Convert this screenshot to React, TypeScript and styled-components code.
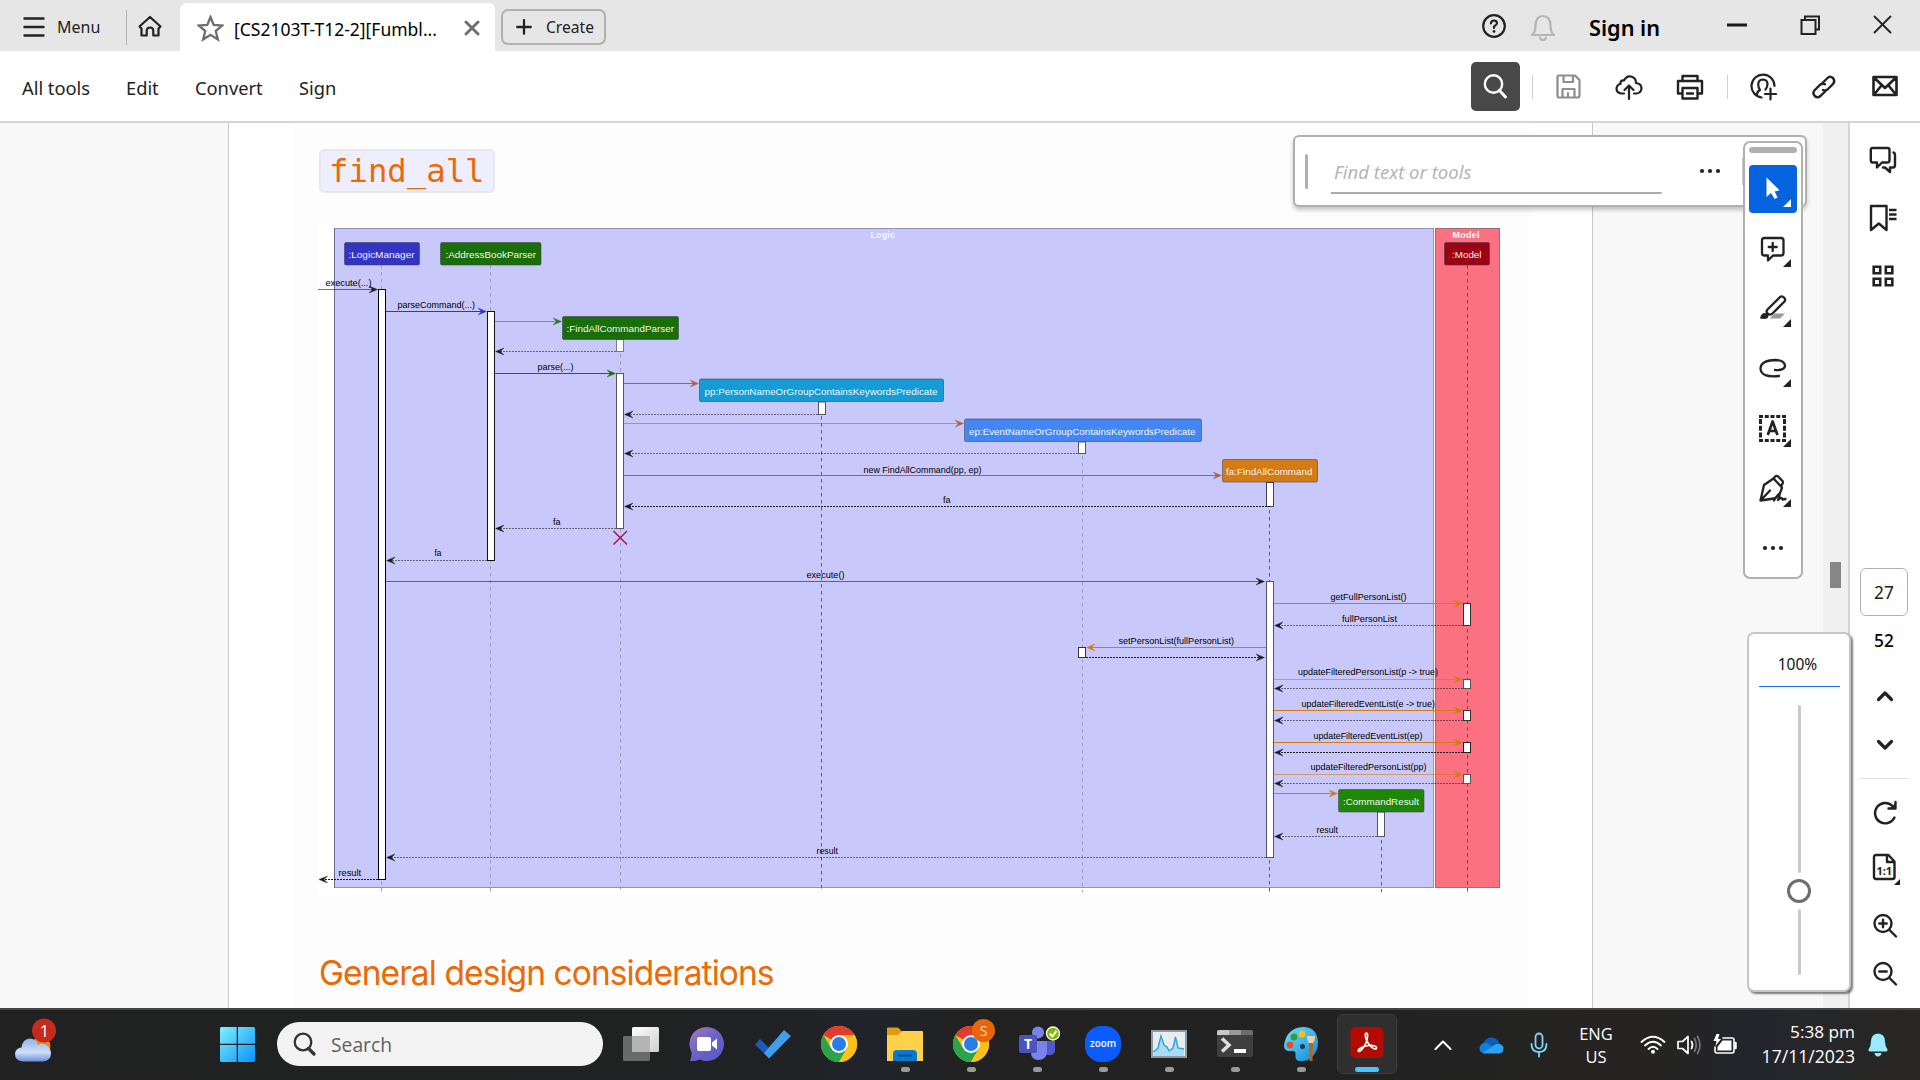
import React from 'react';
import styled, { createGlobalStyle } from 'styled-components';

const UI = '"Noto Sans", "Open Sans", sans-serif';
const INK = '#222222';

const Global = createGlobalStyle`
  * { box-sizing: border-box; }
  html, body { margin: 0; padding: 0; overflow: hidden; }
  body { font-family: ${UI}; color: ${INK}; background: #fff; }
  svg { display: block; flex: none; }
`;

const Screen = styled.div`
  width: 1920px;
  height: 1080px;
  display: grid;
  grid-template-rows: 51px 72px 885px 72px;
  overflow: hidden;
`;

const Spacer = styled.div`
  flex: 1;
`;

/* ---------- title bar ---------- */
const TitleBar = styled.header`
  display: flex;
  align-items: stretch;
  background: #e6e6e6;
`;

const MenuButton = styled.div`
  width: 126px;
  padding: 2px 0 0 23px;
  display: flex;
  align-items: center;
  gap: 12px;
  font-size: 16px;
`;

const TabDivider = styled.div`
  width: 1px;
  margin: 10px 0 6px;
  background: #b4b4b4;
`;

const HomeButton = styled.div`
  width: 53px;
  padding: 15px 0 0 10px;
`;

const DocTab = styled.div`
  width: 315px;
  margin-top: 3px;
  padding: 2px 15px 0 17px;
  border-radius: 6px 6px 0 0;
  background: #fff;
  display: flex;
  align-items: center;
  color: #000;
  font-size: 17.5px;
  white-space: nowrap;
`;

const TabTitle = styled.span`
  width: 206px;
  margin: 1px 25px 0 10px;
`;

const CreateButton = styled.div`
  width: 105px;
  height: 36px;
  margin: 9px 0 0 6px;
  border: 2px solid #b1b1b1;
  border-radius: 7px;
  display: flex;
  align-items: center;
  padding-left: 13px;
  gap: 14px;
  font-size: 15.6px;
`;

const WindowControls = styled.div`
  display: flex;
  align-items: center;
  padding-right: 28px;
`;

const BellSlot = styled.div`
  margin-left: 23px;
  padding-top: 4px;
`;

const RestoreSlot = styled.div`
  margin: 0 52px;
`;

const SignIn = styled.span`
  width: 72px;
  margin: 3px 65px 0 33px;
  font-size: 21.7px;
  font-weight: 600;
  color: #000;
  white-space: nowrap;
`;

/* ---------- tool bar ---------- */
const ToolBar = styled.nav`
  display: flex;
  align-items: center;
  background: #fff;
  border-bottom: 2px solid #d5d5d5;
  padding: 0 21px 0 22px;
`;

const ToolLabel = styled.span<{ $w: number }>`
  width: ${(p) => p.$w}px;
  padding-top: 3px;
  font-size: 18.3px;
  white-space: nowrap;
`;

const SearchToggle = styled.div`
  width: 49px;
  height: 49px;
  padding-right: 2px;
  border-radius: 5px;
  background: #484848;
  display: flex;
  align-items: center;
  justify-content: center;
`;

const ToolSeparator = styled.div<{ $l: number; $r: number }>`
  width: 1px;
  height: 24px;
  margin: 2px ${(p) => p.$r}px 0 ${(p) => p.$l}px;
  background: #cfcfcf;
`;

const ToolIcons = styled.div`
  display: flex;
  gap: 33px;
  padding-top: 2px;
`;

/* ---------- document ---------- */
const Body = styled.main`
  position: relative;
  display: grid;
  grid-template-columns: 228px 1365px 230px 25px 72px;
  overflow: hidden;
`;

const Gutter = styled.div`
  background: #f8f8f8;
`;

const Page = styled.section`
  border: solid #c9c9c9;
  border-width: 0 1px;
  padding: 0 63px 0 64px;
  background: #fff;
`;

const Sheet = styled.div`
  height: 100%;
  background: #fdfdfd;
  padding: 26px 0 0 26px;
`;

const CodeHeading = styled.h2`
  margin: 0;
  width: 176px;
  height: 44px;
  padding-left: 8px;
  border: 2px solid #e8e7f0;
  border-radius: 5px;
  background: #efeefe;
  color: #ea6a06;
  font: 400 32.3px/40px "DejaVu Sans Mono", monospace;
`;

const DiagramFrame = styled.figure`
  margin: 31px 0 0 -1px;
  width: 1185px;
  height: 672px;
  background: #fff;
`;

const SectionHeading = styled.h2`
  margin: 57px 0 0;
  color: #ea6a06;
  font: 400 33.5px/40px Inter, sans-serif;
  letter-spacing: -0.92px;
  white-space: nowrap;
`;

const ScrollTrack = styled.div`
  background: #f0f0f0;
  padding: 439px 0 0 7px;
`;

const ScrollThumb = styled.div`
  width: 11px;
  height: 26px;
  background: #868686;
`;

/* ---------- right rail ---------- */
const Rail = styled.aside`
  background: #fff;
  border-left: 2px solid #d5d5d5;
  display: flex;
  flex-direction: column;
  align-items: center;
  padding: 21px 2px 0 0;
`;

const RailItem = styled.div<{ $h: number; $left?: boolean }>`
  height: ${(p) => p.$h}px;
  width: 68px;
  padding: ${(p) => (p.$left ? '0 2px 0 0' : '0 0 0 2px')};
  display: flex;
  align-items: center;
  justify-content: center;
`;

const CountStack = styled.div`
  display: flex;
  flex-direction: column;
  align-items: center;
`;

const PageBox = styled.div`
  width: 48px;
  height: 48px;
  margin: 276px 0 6px;
  border: 1px solid #b3b3b3;
  border-radius: 6px;
  font-size: 17.3px;
  line-height: 47px;
  text-align: center;
`;

const PageTotal = styled.div`
  height: 38px;
  font-size: 17.3px;
  font-weight: 500;
  line-height: 38px;
  color: #000;
`;

const RuleSlot = styled.div`
  height: 22px;
  margin-bottom: 9px;
  display: flex;
  align-items: flex-end;
`;

const RailRule = styled.div`
  width: 49px;
  height: 1px;
  background: #e0e0e0;
`;

/* ---------- floating panels ---------- */
const FindPanel = styled.div`
  position: absolute;
  left: 1293px;
  top: 12px;
  width: 514px;
  height: 72px;
  border: 2px solid #b0b0b0;
  border-radius: 6px;
  background: #fff;
  box-shadow: 0 3px 4px rgba(0, 0, 0, 0.22);
  display: flex;
  align-items: center;
  padding-left: 10px;
`;

const FindGrip = styled.div`
  width: 3px;
  height: 35px;
  border-radius: 2px;
  background: #b0b0b0;
`;

const FindField = styled.div`
  width: 331px;
  height: 46px;
  margin: 0 37px 0 23px;
  padding: 7px 0 0 3px;
  border-bottom: 2px solid #aaaaaa;
  border-radius: 0 0 2px 0;
  color: #b5b5b5;
  font-size: 18.5px;
  font-style: italic;
  line-height: 34px;
`;

const FindRule = styled.div`
  width: 1px;
  height: 27px;
  margin-left: 21px;
  background: #c8c8c8;
`;

const QuickTools = styled.div`
  position: absolute;
  left: 1743px;
  top: 18px;
  width: 60px;
  height: 438px;
  border: 2px solid #b0b0b0;
  border-radius: 7px;
  background: #fff;
  display: flex;
  flex-direction: column;
  align-items: center;
  padding-top: 4px;
`;

const QuickGrip = styled.div`
  width: 48px;
  height: 6px;
  border-radius: 3px;
  background: #b0b0b0;
  margin-bottom: 12px;
`;

const QuickTool = styled.div<{ $active?: boolean }>`
  width: 48px;
  height: 48px;
  margin-bottom: 12px;
  border-radius: 4px;
  background: ${(p) => (p.$active ? '#0563e0' : 'transparent')};
`;

const QuickMore = styled.div`
  height: 46px;
  display: flex;
  align-items: center;
`;

const ZoomPanel = styled.div`
  position: absolute;
  left: 1747px;
  top: 509px;
  width: 104px;
  height: 360px;
  border: 2px solid #c6c6c6;
  border-radius: 7px;
  background: #fff;
  box-shadow: 2px 2px 2px rgba(0, 0, 0, 0.5);
  display: flex;
  flex-direction: column;
  align-items: center;
`;

const ZoomValue = styled.div`
  width: 81px;
  height: 53px;
  border-bottom: 1px solid #1473e6;
  padding: 16px 3px 0 0;
  font-size: 15.5px;
  line-height: 28px;
  text-align: center;
  color: #111;
`;

const SliderRail = styled.div<{ $h: number; $gap: number }>`
  width: 3px;
  height: ${(p) => p.$h}px;
  margin-top: ${(p) => p.$gap}px;
  border-radius: 2px;
  background: #c8c8c8;
`;

const SliderThumb = styled.div`
  width: 24px;
  height: 24px;
  margin-top: 6px;
  border: 3px solid #6e6e6e;
  border-radius: 50%;
`;

/* ---------- task bar ---------- */
const TaskBar = styled.footer`
  display: flex;
  background: linear-gradient(90deg, #212121 0%, #202122 40%, #20242a 45%, #212121 50%, #222 72%, #252422 86%, #23252c 92%, #25272a 94%, #282622 100%);
  border-top: 2px solid #444;
  color: #fff;
  font-family: "Open Sans", "Noto Sans", sans-serif;
`;

const Weather = styled.div`
  width: 204px;
  padding: 7px 0 0 13px;
`;

const StartCell = styled.div`
  width: 73px;
  padding: 17px 0 0 16px;
`;

const SearchBox = styled.div`
  width: 326px;
  height: 44px;
  margin: 12px 5px 0 0;
  border-radius: 22px;
  background: #f3f3f3;
  display: flex;
  align-items: center;
  gap: 15px;
  padding-left: 15px;
  color: #5f5f5f;
  font-size: 19.3px;
`;

const AppSlot = styled.div`
  width: 66px;
`;

const AppCell = styled.div<{ $active?: boolean }>`
  width: 60px;
  height: 60px;
  margin: 4px 3px 0;
  padding-top: 9px;
  border-radius: 6px;
  border: 1px solid ${(p) => (p.$active ? '#3c3c3c' : 'transparent')};
  background: ${(p) => (p.$active ? '#2f2f2f' : 'transparent')};
  display: flex;
  flex-direction: column;
  align-items: center;
`;

const ArtLift = styled.div`
  margin-top: -6px;
  height: 48px;
`;

const RunMark = styled.div<{ $active?: boolean }>`
  width: ${(p) => (p.$active ? 24 : 9)}px;
  height: 5px;
  margin-top: 1px;
  border-radius: 3px;
  background: ${(p) => (p.$active ? '#4cc2ff' : '#9a9a9a')};
`;

const TrayCell = styled.div<{ $w: number; $ml?: number }>`
  width: ${(p) => p.$w}px;
  margin-left: ${(p) => p.$ml ?? 0}px;
  display: flex;
  align-items: center;
  justify-content: center;
  text-align: center;
  font-size: 16.5px;
  line-height: 23px;
`;

const Clock = styled.div`
  width: 112px;
  padding-top: 10px;
  text-align: right;
  font-size: 17.2px;
  line-height: 24px;
  white-space: nowrap;
`;

const DateLine = styled.div`
  font-size: 17.6px;
`;

/* ---------- icons ---------- */
type IconProps = {
  w: number;
  h?: number;
  sw?: number;
  color?: string;
  children: React.ReactNode;
};

const Icon = ({ w, h = w, sw = 2.2, color = INK, children }: IconProps) => (
  <svg
    width={w}
    height={h}
    viewBox={`0 0 ${w} ${h}`}
    fill="none"
    stroke={color}
    strokeWidth={sw}
    strokeLinecap="round"
    strokeLinejoin="round"
  >
    {children}
  </svg>
);

const Dots = () => (
  <Icon w={22} h={6}>
    {[3, 11, 19].map((x) => (
      <circle key={x} cx={x} cy={3} r={2.1} fill={INK} stroke="none" />
    ))}
  </Icon>
);

const Corner = ({ color = INK }: { color?: string }) => (
  <path d="M42 34 V42 H34 Z" fill={color} stroke="none" />
);

const quickIcons: React.ReactNode[] = [
  <>
    <path d="M17.5 12.5 V32 L22 28 L25.6 34 L28.6 32.6 L25.6 26.4 L30.6 25.2 Z" fill="#fff" stroke="none" />
    <Corner color="#fff" />
  </>,
  <>
    <path d="M15.5 13 H32 Q34.5 13 34.5 15.5 V28 Q34.5 30.5 32 30.5 H24 L19 35.5 V30.5 H15.5 Q13 30.5 13 28 V15.5 Q13 13 15.5 13 Z" />
    <path d="M23.7 18 V26 M19.7 22 H27.7" />
    <Corner />
  </>,
  <>
    <g transform="translate(0 2)">
      <path d="M26 26.5 H36 L31 31.5 H20.5 Z" fill="#999" stroke="none" />
      <path d="M18.5 22.5 L31 10 Q33 8.5 35 10.5 Q37 12.5 35.5 14.5 L23 27 Q20 28.5 18 26 Q17 24 18.5 22.5 Z" />
      <path d="M11 31.5 Q12 26 16 26 Q19.5 26.5 19.5 29 Q19 32 15 32 Z" fill={INK} stroke="none" />
    </g>
    <Corner />
  </>,
  <>
    <path d="M26 25 Q36 25.500 36 20.500 Q35 15 26 15 Q12 15.500 11.500 23.500 Q12 33 30 31" />
    <Corner />
  </>,
  <>
    <g transform="translate(0 1)">
      <path d="M10 10.500 H37 M10 34.500 H37" strokeWidth={3} strokeDasharray="4 1.75" strokeLinecap="butt" />
      <path d="M11.500 13 V34 M35.500 13 V34" strokeWidth={3} strokeDasharray="5 1.8" strokeLinecap="butt" />
      <path d="M18.800 29 L23.600 15.500 L28.500 29 M20.300 25 H27" strokeWidth={2.7} strokeLinecap="butt" />
    </g>
    <Corner />
  </>,
  <>
    <g transform="translate(0 2)">
      <path d="M11.5 33.5 L15 18 L24.5 11.5 L33 20.5 Q31 29 25 31.5 Z M11.5 33.5 L21 23.5 M24.5 11.5 L26.5 9.2 Q28 8.4 29.5 9.8 L33.5 14 Q34.5 15.5 33 17.5 L32 19" />
      <path d="M25 33.5 Q29 27 30.5 26.5 Q31 29 29 33 Q33 29 33.5 32.5 L36.5 32" />
    </g>
    <Corner />
  </>,
];

const ChromeLogo = ({ badge = false }: { badge?: boolean }) => (
  <svg width="48" height="46" viewBox="-1 0 48 46">
    <circle cx="23" cy="26" r="18" fill="#fbc116" />
    <path d="M23 26 L7.4 17 A18 18 0 0 1 38.6 17 Z" fill="#e33b2e" />
    <path d="M7.4 17 A18 18 0 0 0 23 44 L31 30.5 L23 26 L15.2 30.5 Z" fill="#2ba24c" />
    <path d="M23 17 H38.6 A18 18 0 0 1 23 44 L30.8 30.5 Z" fill="#fbc116" />
    <circle cx="23" cy="26" r="9" fill="#fff" />
    <circle cx="23" cy="26" r="7" fill="#2a7de9" />
    {badge && (
      <>
        <circle cx="35.500" cy="12.500" r="11.500" fill="#e8660a" />
        <text x="35.500" y="17.500" textAnchor="middle" fontSize="14" fontFamily="Open Sans, sans-serif" fill="#ffd9bd">S</text>
      </>
    )}
  </svg>
);

const Art = ({ children }: { children: React.ReactNode }) => (
  <svg width="46" height="46" viewBox="0 0 46 46">{children}</svg>
);

const apps: { id: string; running?: boolean; active?: boolean; art: React.ReactNode }[] = [
  {
    id: 'views',
    art: (
      <Art>
        <defs>
          <linearGradient id="tv" x1="0" y1="0" x2="1" y2="1">
            <stop offset="0" stopColor="#fff" />
            <stop offset="1" stopColor="#cfcfcf" />
          </linearGradient>
        </defs>
        <rect x="14" y="9" width="27" height="25" rx="1.5" fill="url(#tv)" />
        <rect x="5" y="18" width="27" height="25" rx="1.5" fill="#777" fillOpacity="0.85" />
        <rect x="14" y="18" width="18" height="16" fill="#b4b4b4" />
      </Art>
    ),
  },
  {
    id: 'chat',
    art: (
      <Art>
        <defs>
          <linearGradient id="chat" x1="0" y1="0" x2="1" y2="1">
            <stop offset="0" stopColor="#a87ab8" />
            <stop offset="0.5" stopColor="#6a62c8" />
            <stop offset="1" stopColor="#5558c8" />
          </linearGradient>
        </defs>
        <path d="M23 9 A17 17 0 1 1 16 41.5 Q11 43.5 6 43 Q8 38 7.5 34 A17 17 0 0 1 23 9 Z" fill="url(#chat)" />
        <rect x="13" y="19" width="14" height="14" rx="2" fill="#fff" />
        <path d="M28 24.5 L33 20.5 V31.5 L28 27.5 Z" fill="#fff" />
      </Art>
    ),
  },
  {
    id: 'todo',
    art: (
      <Art>
        <path d="M5 26.5 L10 21 L23.5 34.5 L18.5 40 Z" fill="#185abd" />
        <path d="M14 35 L34 12 L41 18 L19 40.5 Z" fill="#3f9fee" />
      </Art>
    ),
  },
  { id: 'chrome', art: <ChromeLogo /> },
  {
    id: 'files',
    running: true,
    art: (
      <Art>
        <path d="M5 10 Q5 9.5 6 9.5 H16 L19.5 13 V18 H5 Z" fill="#dd9c12" />
        <path d="M5 17 H16 L20 13 H40 Q41 13 41 14 V43 H5 Z" fill="#ffd04a" />
        <path d="M11 43 V36 Q11 32 15 32 H31 Q35 32 35 36 V43 Z" fill="#0b78cc" />
        <path d="M16 37.5 H30" stroke="#064f94" strokeWidth="2" />
      </Art>
    ),
  },
  { id: 'chrome-s', running: true, art: <ChromeLogo badge /> },
  {
    id: 'teams',
    running: true,
    art: (
      <Art>
        <circle cx="24" cy="14.5" r="6" fill="#7b83eb" />
        <path d="M31 23 H41 V33 Q40 38 34 37 H31 Z" fill="#5059c9" />
        <path d="M17 23 H33 V34 Q32 42 24.5 42 Q17 42 17 34 Z" fill="#7b83eb" />
        <rect x="5" y="17" width="18" height="18" rx="2" fill="#4b53bc" />
        <text x="14" y="31" textAnchor="middle" fontSize="14" fontWeight="700" fontFamily="Open Sans, sans-serif" fill="#fff">T</text>
        <circle cx="39" cy="15.500" r="6.500" fill="#7fba00" stroke="#fff" strokeWidth="1.3" />
        <path d="M35.600 15.500 L38.300 18.500 L42.500 12.800" fill="none" stroke="#fff" strokeWidth="2" />
      </Art>
    ),
  },
  {
    id: 'zoom',
    running: true,
    art: (
      <Art>
        <rect x="5" y="8" width="36" height="36" rx="16" fill="#0b5cff" />
        <text x="23" y="29" textAnchor="middle" fontSize="11" textLength="26" lengthAdjust="spacingAndGlyphs" fontWeight="600" fontFamily="Open Sans, sans-serif" fill="#fff">zoom</text>
      </Art>
    ),
  },
  {
    id: 'monitor',
    running: true,
    art: (
      <Art>
        <rect x="6" y="13" width="34" height="26" fill="#e9edf0" stroke="#8c9aa5" strokeWidth="2" />
        <path d="M7.5 34 L12 30 L15 17 L18 27 L21 29 L23 32 L27 30 L29.5 18 L32 30 L38 31 V38 H7.5 Z" fill="#a9dcf7" />
        <path d="M7.5 34 L12 30 L15 18 L18 27 L21 29 L23 33 L27 30 L29.5 19 L32 30 L38 31" fill="none" stroke="#32a0dc" strokeWidth="1.4" />
      </Art>
    ),
  },
  {
    id: 'terminal',
    running: true,
    art: (
      <Art>
        <rect x="5" y="12" width="36" height="27" rx="2" fill="#3f3f3f" />
        <path d="M5 17 V14 Q5 12 7 12 H17 V17 Z" fill="#c8c8c8" />
        <rect x="17" y="12" width="12" height="5" fill="#999" />
        <path d="M29 12 H39 Q41 12 41 14 V17 H29 Z" fill="#6d6d6d" />
        <path d="M10 20.5 L17 27 L10 33.5" fill="none" stroke="#ddd" strokeWidth="3.6" />
        <rect x="22" y="31" width="12" height="4" fill="#fff" />
      </Art>
    ),
  },
  {
    id: 'paint',
    running: true,
    art: (
      <Art>
        <defs>
          <linearGradient id="pal" x1="0" y1="0" x2="1" y2="1">
            <stop offset="0" stopColor="#6be3fb" />
            <stop offset="1" stopColor="#1487d9" />
          </linearGradient>
        </defs>
        <path d="M25 9 Q39 9 40 24 Q40 34 33 40 Q29 43.5 22 43 Q17 43 17.5 37 Q18 32 13 33 Q6.5 34 6 28 Q8 10 25 9 Z" fill="url(#pal)" />
        <circle cx="12" cy="27" r="3.4" fill="#e0502a" />
        <circle cx="16" cy="19" r="3.4" fill="#3a9b35" />
        <circle cx="24" cy="16" r="3.4" fill="#fcbf12" />
        <circle cx="24.5" cy="28.5" r="2.5" fill="#16384c" />
        <path d="M31 24 H35 L34.5 43 H31.5 Z" fill="#b06a1c" />
        <path d="M29 18 H37 Q37 23 35 25 H31 Q29 23 29 18 Z" fill="#f0d0a0" />
      </Art>
    ),
  },
  {
    id: 'acrobat',
    running: true,
    active: true,
    art: (
      <Art>
        <rect x="6.500" y="9" width="33" height="31" rx="5" fill="#b30b00" />
        <path
          d="M22.3 15 C20.3 15 21.3 20.500 24 25 C26 28.500 30.500 32 32.200 30.700 C34 28.500 29 26.800 24.500 27.500 C20 28.100 14 30.800 14.200 32.800 C15.500 35.500 20 29.500 22.200 24.500 C23.800 20 24.300 15 22.300 15 Z"
          fill="none"
          stroke="#fff"
          strokeWidth="1.7"
        />
      </Art>
    ),
  },
];

/* ---------- sequence diagram ---------- */
const BLUE = '#3333c4';
const GREEN = '#1a6e08';
const BROWN = '#b0603f';
const ORANGE = '#d6790f';
const DARK = '#1c1c22';

type Lifeline = { x: number; from: number; strong?: boolean; color?: string };
const lifelines: Lifeline[] = [
  { x: 381.5, from: 265 },
  { x: 490.5, from: 265 },
  { x: 620.5, from: 340 },
  { x: 821.5, from: 402, strong: true },
  { x: 1082.5, from: 442 },
  { x: 1269.5, from: 482, strong: true },
  { x: 1381.5, from: 812, strong: true },
  { x: 1467.5, from: 265, strong: true, color: '#8f3b4c' },
];

type Head = { x: number; y: number; w: number; h: number; fill: string; label: string; tx: number; tw: number };
const heads: Head[] = [
  { x: 344.5, y: 242.5, w: 75, h: 22.5, fill: BLUE, label: ':LogicManager', tx: 348.5, tw: 66 },
  { x: 440.5, y: 242.5, w: 100.5, h: 22.5, fill: GREEN, label: ':AddressBookParser', tx: 445.5, tw: 90.5 },
  { x: 562.5, y: 316.5, w: 116, h: 23, fill: GREEN, label: ':FindAllCommandParser', tx: 566.5, tw: 107.5 },
  { x: 699.5, y: 379, w: 244, h: 22.5, fill: '#159cd6', label: 'pp:PersonNameOrGroupContainsKeywordsPredicate', tx: 704.5, tw: 233 },
  { x: 964.5, y: 419, w: 237, h: 22.5, fill: '#4287f5', label: 'ep:EventNameOrGroupContainsKeywordsPredicate', tx: 969, tw: 226.5 },
  { x: 1222.5, y: 459.5, w: 95, h: 22.5, fill: '#d47b14', label: 'fa:FindAllCommand', tx: 1226, tw: 86.5 },
  { x: 1338.5, y: 789.5, w: 85.5, h: 22.5, fill: '#1e8806', label: ':CommandResult', tx: 1343, tw: 76 },
  { x: 1444.5, y: 242.5, w: 45, h: 22.5, fill: '#9c0012', label: ':Model', tx: 1452, tw: 29.5 },
];

type Bar = [x: number, y1: number, y2: number, color: string];
const bars: Bar[] = [
  [378.5, 289.5, 879.5, '#000'],
  [487.5, 311.5, 560.5, '#111'],
  [616.5, 339.5, 351.5, '#777785'],
  [616.5, 373.5, 528.5, '#555562'],
  [818.5, 402, 414.5, '#555562'],
  [1078.5, 442, 453.5, '#555562'],
  [1078.5, 647.5, 657.5, '#333'],
  [1266.5, 482.5, 506.5, '#444'],
  [1266.5, 581.5, 857.5, '#555562'],
  [1377.5, 812, 836.5, '#555562'],
  [1463.5, 603.5, 625.5, '#333'],
  [1463.5, 679.5, 688.5, '#555'],
  [1463.5, 710.5, 720.5, '#333'],
  [1463.5, 742.5, 752.5, '#222'],
  [1463.5, 774.5, 783.5, '#555'],
];

type Message = {
  from: number;
  to: number;
  y: number;
  color: string;
  soft?: boolean;
  dashed?: boolean;
  text?: [label: string, x: number, width: number, baseline: number];
};
const messages: Message[] = [
  { from: 318, to: 378, y: 289.5, color: DARK, soft: true, text: ['execute(...)', 325.5, 46, 286] },
  { from: 386, to: 487, y: 311.5, color: BLUE, text: ['parseCommand(...)', 397.5, 77.5, 307.5] },
  { from: 495, to: 562, y: 321.5, color: '#237a1c', soft: true },
  { from: 616, to: 495, y: 351.5, color: DARK, soft: true, dashed: true },
  { from: 495, to: 616, y: 373.5, color: GREEN, text: ['parse(...)', 537.5, 36, 370] },
  { from: 624, to: 699, y: 383.5, color: BROWN },
  { from: 818, to: 624, y: 414.5, color: DARK, soft: true, dashed: true },
  { from: 624, to: 964, y: 423.5, color: BROWN, soft: true },
  { from: 1078, to: 624, y: 453.5, color: DARK, soft: true, dashed: true },
  { from: 624, to: 1222, y: 475.5, color: BROWN, text: ['new FindAllCommand(pp, ep)', 863.5, 118, 472.5] },
  { from: 1270, to: 624, y: 506.5, color: DARK, dashed: true, text: ['fa', 943, 7.5, 502.5] },
  { from: 616, to: 495, y: 528.5, color: DARK, soft: true, dashed: true, text: ['fa', 553, 7.5, 525] },
  { from: 487, to: 386, y: 560.5, color: DARK, soft: true, dashed: true, text: ['fa', 434.5, 7, 556] },
  { from: 386, to: 1265, y: 581.5, color: DARK, soft: true, text: ['execute()', 806.5, 38, 578] },
  { from: 1274, to: 1463, y: 603.5, color: ORANGE, text: ['getFullPersonList()', 1330.5, 76, 600] },
  { from: 1463, to: 1274, y: 625.5, color: DARK, soft: true, dashed: true, text: ['fullPersonList', 1342, 55, 622] },
  { from: 1266, to: 1086, y: 647.5, color: ORANGE, text: ['setPersonList(fullPersonList)', 1118.5, 115.5, 644] },
  { from: 1086, to: 1265, y: 657.5, color: DARK, dashed: true },
  { from: 1274, to: 1463, y: 679.5, color: ORANGE, soft: true, text: ['updateFilteredPersonList(p -> true)', 1298, 140, 675] },
  { from: 1463, to: 1274, y: 688.5, color: DARK, soft: true, dashed: true },
  { from: 1274, to: 1463, y: 710.5, color: ORANGE, text: ['updateFilteredEventList(e -> true)', 1301.5, 133.5, 707] },
  { from: 1463, to: 1274, y: 720.5, color: DARK, soft: true, dashed: true },
  { from: 1274, to: 1463, y: 742.5, color: ORANGE, text: ['updateFilteredEventList(ep)', 1313.5, 109, 739] },
  { from: 1463, to: 1274, y: 752.5, color: DARK, dashed: true },
  { from: 1274, to: 1463, y: 774.5, color: ORANGE, soft: true, text: ['updateFilteredPersonList(pp)', 1310.5, 116, 770] },
  { from: 1463, to: 1274, y: 783.5, color: DARK, soft: true, dashed: true },
  { from: 1274, to: 1338, y: 793.5, color: ORANGE },
  { from: 1377, to: 1274, y: 836.5, color: DARK, soft: true, dashed: true, text: ['result', 1316.5, 21.5, 832.5] },
  { from: 1266, to: 386, y: 857.5, color: DARK, soft: true, dashed: true, text: ['result', 816.5, 21.5, 854] },
  { from: 378, to: 318.5, y: 879.5, color: DARK, dashed: true, text: ['result', 338.5, 22.5, 876] },
];

const Arrow = ({ m }: { m: Message }) => {
  const d = m.to > m.from ? 1 : -1;
  const tip = m.to - d * 0.5;
  return (
    <g>
      <line
        x1={m.from}
        x2={tip - d * 2}
        y1={m.y}
        y2={m.y}
        stroke={m.color}
        strokeOpacity={m.soft ? 0.6 : 1}
        strokeDasharray={m.dashed ? '2 1' : undefined}
      />
      <path
        d={`M${tip} ${m.y} l${-d * 8.5} -3.5 l${d * 3.5} 3.5 l${-d * 3.5} 3.5 Z`}
        fill={m.color}
        stroke={m.color}
        strokeWidth="0.4"
      />
    </g>
  );
};

const Diagram = () => (
  <svg width="1185" height="672" viewBox="318 224 1185 672" fontFamily='"Liberation Sans", Arial, sans-serif'>
    <rect x="334.5" y="228.5" width="1099" height="659" fill="#c8c8fa" stroke="#9393b6" />
    <path d="M334.5 228 V888" stroke="#6d6d88" />
    <rect x="1435.5" y="228.5" width="64" height="659" fill="#fb7182" stroke="#a06a76" />
    <text x="870.5" y="237.5" fontSize="9" fontWeight="700" textLength="24.5" fill="#fff" fillOpacity="0.85">Logic</text>
    <text x="1452.5" y="237.5" fontSize="9" fontWeight="700" textLength="27" fill="#fff">Model</text>
    {lifelines.map((l) => (
      <line
        key={l.x}
        x1={l.x}
        x2={l.x}
        y1={l.from}
        y2={892}
        stroke={l.color ?? (l.strong ? '#5f5f7a' : '#9c9cbf')}
        strokeDasharray="3.5 3.5"
      />
    ))}
    {bars.map(([x, y1, y2, color]) => (
      <rect key={`${x}-${y1}`} x={x} y={y1} width={7} height={y2 - y1} fill="#fff" stroke={color} />
    ))}
    {heads.map((h) => (
      <g key={h.label}>
        <rect x={h.x} y={h.y} width={h.w} height={h.h} rx={1.5} fill={h.fill} stroke="#3c3c50" strokeOpacity={0.55} />
        <text x={h.tx} y={h.y + 15.5} fontSize="9.9" textLength={h.tw} lengthAdjust="spacingAndGlyphs" fill="#f2f5f0">
          {h.label}
        </text>
      </g>
    ))}
    {messages.map((m) => (
      <Arrow key={`${m.y}-${m.from}`} m={m} />
    ))}
    {messages.map((m) =>
      m.text ? (
        <text
          key={`t${m.y}`}
          x={m.text[1]}
          y={m.text[3]}
          fontSize="9"
          textLength={m.text[2]}
          lengthAdjust="spacingAndGlyphs"
          fill="#000"
        >
          {m.text[0]}
        </text>
      ) : null,
    )}
    <path d="M613.5 531 L627 544.5 M627 531 L613.5 544.5" stroke="#a80b4e" strokeWidth="1.4" />
  </svg>
);

export default function App() {
  return (
    <>
      <Global />
      <Screen>
        <TitleBar>
          <MenuButton>
            <Icon w={22} h={20} sw={2.4}>
              <path d="M1.5 1.5 H20.5 M1.5 10 H20.5 M1.5 18.5 H20.5" />
            </Icon>
            Menu
          </MenuButton>
          <TabDivider />
          <HomeButton>
            <Icon w={26} h={23}>
              <path d="M13 2 L2.5 11.5 L4.5 13.5 V20.5 H9.7 V15.5 Q10 12.5 13 12.5 Q16 12.5 16.3 15.5 V20.5 H21.5 V13.5 L23.5 11.5 Z" />
            </Icon>
          </HomeButton>
          <DocTab>
            <Icon w={27} h={27} color="#6e6e6e" sw={2.3}>
              <path d="M13.5 2 L16.7 10 L25.3 10.5 L18.7 16 L20.9 24.5 L13.5 19.8 L6.1 24.5 L8.3 16 L1.7 10.5 L10.3 10 Z" strokeLinejoin="miter" />
            </Icon>
            <TabTitle>[CS2103T-T12-2][Fumbl...</TabTitle>
            <Icon w={16} color="#6e6e6e" sw={2.9}>
              <path d="M2 2 L14 14 M14 2 L2 14" />
            </Icon>
          </DocTab>
          <CreateButton>
            <Icon w={16} sw={2.3}>
              <path d="M8 1.2 V14.8 M1.2 8 H14.8" />
            </Icon>
            Create
          </CreateButton>
          <Spacer />
          <WindowControls>
            <Icon w={26} sw={2.2}>
              <circle cx="13" cy="13" r="10.8" />
              <path d="M9.9 10.3 Q10.3 7.5 13 7.5 Q16 7.7 16 10.3 Q15.9 12 13 13.4 V15" />
              <circle cx="13" cy="18.4" r="1.4" fill={INK} stroke="none" />
            </Icon>
            <BellSlot>
              <Icon w={26} h={28} color="#b5b5b5">
                <path d="M2 21 Q5.5 18.5 5.5 11 Q6 2 13 2 Q20 2 20.5 11 Q20.5 18.5 24 21 Z" />
                <path d="M10 23.5 Q10.5 26 13 26 Q15.5 26 16 23.5" />
              </Icon>
            </BellSlot>
            <SignIn>Sign in</SignIn>
            <Icon w={22} h={22} sw={3} color="#1a1a1a">
              <path d="M1 10 H21" strokeLinecap="butt" />
            </Icon>
            <RestoreSlot>
              <Icon w={21} h={21} sw={2}>
                <path d="M5 5 V1.5 H19 V14.5 H15.5 M1.5 5 H15.5 V19 H1.5 Z" strokeLinejoin="miter" />
              </Icon>
            </RestoreSlot>
            <Icon w={19} h={21} sw={1.8}>
              <path d="M1.500 1.500 L17.500 17.500 M17.500 1.500 L1.500 17.500" />
            </Icon>
          </WindowControls>
        </TitleBar>

        <ToolBar>
          <ToolLabel $w={104}>All tools</ToolLabel>
          <ToolLabel $w={69}>Edit</ToolLabel>
          <ToolLabel $w={104}>Convert</ToolLabel>
          <ToolLabel $w={40}>Sign</ToolLabel>
          <Spacer />
          <SearchToggle>
            <Icon w={26} color="#fff" sw={2.4}>
              <circle cx="11.5" cy="11" r="8.7" />
              <path d="M17.5 17.5 L23.5 24" strokeWidth="3" />
            </Icon>
          </SearchToggle>
          <ToolSeparator $l={12} $r={23} />
          <ToolIcons>
            <Icon w={26} h={28} color="#8e8e8e">
              <path d="M3 2.500 H19 L23.500 7 V22.500 Q23.500 24.500 21.500 24.500 H3 Q1.500 24.500 1.500 22.500 V4 Q1.500 2.500 3 2.500 Z M7.500 3 V9 H17 V3 M6.500 24 V16 H18.500 V24 M12 23.500 V20" />
            </Icon>
            <Icon w={28} h={28}>
              <path d="M9 20.5 H6.5 Q1.5 20 1.5 15.5 Q2 11.500 5.500 11 Q5 7 9 7.500 Q11.500 2.500 16 3.500 Q21 4.500 21 10 Q26.500 10.500 26.500 15.500 Q26 20 21.500 20.500 H19 M14 26 V13 M9.500 17 L14 12.500 L18.500 17" />
            </Icon>
            <Icon w={28} h={28} sw={2.4}>
              <path d="M6.5 7.500 V3 H21.500 V7.500 M6 20.500 H2 V8 H26 V20.500 H22.500 M6.500 15 H21.500 V25.500 H6.500 Z M11 20.500 H17" />
            </Icon>
          </ToolIcons>
          <ToolSeparator $l={23} $r={21} />
          <ToolIcons>
            <Icon w={28} h={28}>
              <path d="M12.500 24.500 A11.500 11.500 0 1 1 25.500 13 M8 21.500 Q8 18.500 11 17 Q9 14.500 9.300 10.500 Q10 6.500 14 6.500 Q18.500 7 18.500 11 Q18.500 14 16.500 16.500 M21.500 15.500 V26.500 M16 21 H27" />
            </Icon>
            <Icon w={28} h={28} sw={2.4}>
              <path d="M12 10.500 L17.500 5 Q20 2.500 23 5 Q25.500 8 23 11 L17.500 16.500 Q15.500 18 13 17 M16 17.500 L10.500 23 Q7.500 25.500 4.800 23 Q2 20 4.800 17 L10 11.800 Q12.500 10 15 11.300" />
            </Icon>
            <Icon w={28} h={28} sw={2.6}>
              <path d="M2.500 4 H25.500 V22 H2.500 Z M3.500 5 L14 15 L24.500 5 M3.500 21 L10.500 12.500 M24.500 21 L17.500 12.500" />
            </Icon>
          </ToolIcons>
        </ToolBar>

        <Body>
          <Gutter />
          <Page>
            <Sheet>
              <CodeHeading>find_all</CodeHeading>
              <DiagramFrame>
                <Diagram />
              </DiagramFrame>
              <SectionHeading>General design considerations</SectionHeading>
            </Sheet>
          </Page>
          <Gutter />
          <ScrollTrack>
            <ScrollThumb />
          </ScrollTrack>
          <Rail>
            <RailItem $h={32} $left>
              <Icon w={28} h={28} sw={2.4}>
                <path d="M3.5 2 H18.5 Q20.5 2 20.5 4 V14 Q20.5 16.5 18.5 16.5 H13 L8 21.5 V16.5 H3.5 Q1.8 16.5 1.8 14 V4 Q1.8 2 3.5 2 Z M24.5 6.5 Q26 7 26 9 V19 Q26 21.5 24 21.5 H21 V26 L16 21.5 H14" />
              </Icon>
            </RailItem>
            <RailItem $h={84} $left>
              <Icon w={28} h={28} sw={2.4}>
                <path d="M2 2 H17.5 V26 L9.8 19.5 L2 26 Z" />
                <path d="M20 6 H27.5 M20 10.500 H27.500 M20 15 H27.500" strokeLinecap="butt" />
              </Icon>
            </RailItem>
            <RailItem $h={32} $left>
              <Icon w={22} h={22} sw={2.6}>
                <path d="M1.700 1.700 H8.200 V8.200 H1.700 Z M13.800 1.700 H20.300 V8.200 H13.800 Z M1.700 13.800 H8.200 V20.300 H1.700 Z M13.800 13.800 H20.300 V20.300 H13.800 Z" strokeLinejoin="miter" />
              </Icon>
            </RailItem>
            <CountStack>
              <PageBox>27</PageBox>
              <PageTotal>52</PageTotal>
            </CountStack>
            <RailItem $h={72}>
              <Icon w={18} h={12} sw={3.2}>
                <path d="M2.5 9.5 L9 3 L15.5 9.5" />
              </Icon>
            </RailItem>
            <RailItem $h={25}>
              <Icon w={18} h={12} sw={3.2}>
                <path d="M2.5 2.5 L9 9 L15.5 2.5" />
              </Icon>
            </RailItem>
            <RuleSlot>
              <RailRule />
            </RuleSlot>
            <RailItem $h={50}>
              <Icon w={26} h={26} sw={2.4}>
                <path d="M22.5 17.5 A10.2 10.2 0 1 1 20.5 6 M23.5 2 V8.5 H16.5" />
                <path d="M24 2.5 V9 H17 Z" fill={INK} stroke="none" />
              </Icon>
            </RailItem>
            <RailItem $h={60}>
              <Icon w={30} h={34} sw={2.4}>
                <path d="M6 4 H18.5 L24.5 10.5 V26 Q24.5 28 22.5 28 H6 Q4 28 4 26 V6 Q4 4 6 4 Z M17 4.5 V11 H24" />
                <text x="14.3" y="23.5" textAnchor="middle" fontSize="11" fontWeight="700" stroke="none" fill={INK}>1:1</text>
                <path d="M30 28 V34 H24 Z" fill={INK} stroke="none" />
              </Icon>
            </RailItem>
            <RailItem $h={55}>
              <Icon w={26} h={26} sw={2.4}>
                <circle cx="11" cy="10.5" r="8.5" />
                <path d="M17.5 17 L24 23.5 M11 6.8 V14.2 M7.3 10.5 H14.7" />
              </Icon>
            </RailItem>
            <RailItem $h={42}>
              <Icon w={26} h={26} sw={2.4}>
                <circle cx="11" cy="10.5" r="8.5" />
                <path d="M17.5 17 L24 23.5 M7.3 10.5 H14.7" />
              </Icon>
            </RailItem>
          </Rail>

          <FindPanel>
            <FindGrip />
            <FindField>Find text or tools</FindField>
            <Dots />
            <FindRule />
          </FindPanel>
          <QuickTools>
            <QuickGrip />
            {quickIcons.map((art, i) => (
              <QuickTool key={i} $active={i === 0}>
                <Icon w={48} sw={2.3}>{art}</Icon>
              </QuickTool>
            ))}
            <QuickMore>
              <Dots />
            </QuickMore>
          </QuickTools>
          <ZoomPanel>
            <ZoomValue>100%</ZoomValue>
            <SliderRail $h={168} $gap={18} />
            <SliderThumb />
            <SliderRail $h={66} $gap={6} />
          </ZoomPanel>
        </Body>

        <TaskBar>
          <Weather>
            <svg width="44" height="48" viewBox="0 0 44 48">
              <defs>
                <linearGradient id="cloud" x1="0" y1="0" x2="0" y2="1">
                  <stop offset="0" stopColor="#8db4f0" />
                  <stop offset="0.6" stopColor="#cfdffa" />
                  <stop offset="1" stopColor="#6c90dd" />
                </linearGradient>
              </defs>
              <circle cx="28" cy="29" r="9.5" fill="#f08a12" />
              <path d="M10 44.5 Q2 44 2 37 Q2.5 31 8.5 30.5 Q9.5 22 17 21.5 Q23 21.5 25 28 Q30 25 34.5 29 Q38 32 38 37 Q37.5 44 30 44.5 Z" fill="url(#cloud)" />
              <circle cx="31" cy="13.5" r="12" fill="#c42b1c" />
              <text x="31.5" y="19.5" textAnchor="middle" fontSize="16.5" fill="#fff">1</text>
            </svg>
          </Weather>
          <StartCell>
            <svg width="35" height="35" viewBox="0 0 35 35">
              <defs>
                <linearGradient id="win" x1="0" y1="0" x2="35" y2="35" gradientUnits="userSpaceOnUse">
                  <stop offset="0" stopColor="#7df3ff" />
                  <stop offset="0.5" stopColor="#44c0fb" />
                  <stop offset="1" stopColor="#0a93f8" />
                </linearGradient>
              </defs>
              <path d="M1 0 H16.7 V16.7 H0 V1 Z M18 0 H34 L35 1 V16.7 H18 Z M0 18 H16.7 V35 H1 L0 34 Z M18 18 H35 V34 L34 35 H18 Z" fill="url(#win)" />
            </svg>
          </StartCell>
          <SearchBox>
            <Icon w={24} color="#333" sw={2.3}>
              <circle cx="11" cy="10" r="8.3" />
              <path d="M16.5 16.5 L22 22" strokeWidth="3.2" />
            </Icon>
            Search
          </SearchBox>
          {apps.map((a) => (
            <AppSlot key={a.id}>
              <AppCell $active={a.active}>
                <ArtLift>{a.art}</ArtLift>
                {a.running && <RunMark $active={a.active} />}
              </AppCell>
            </AppSlot>
          ))}
          <TrayCell $w={48} $ml={19}>
            <Icon w={18} h={12} color="#fff" sw={2}>
              <path d="M1.5 10 L9 2.5 L16.5 10" />
            </Icon>
          </TrayCell>
          <TrayCell $w={48}>
            <svg width="25" height="17" viewBox="0 0 25 17">
              <path d="M3 9 Q6 0.5 12 0.5 Q18 0.5 20 6 L12 12 Z" fill="#0a5fb8" />
              <path d="M5 16.5 Q0.5 15.5 0.5 11.5 Q1 6.5 6 6 Q8 5.5 11 8 L18 13 Z" fill="#1080d8" />
              <path d="M3.5 16 L17 7 Q22.5 5.5 24.5 10.5 Q25 16 20 16.5 H6 Z" fill="#2aa4f0" />
            </svg>
          </TrayCell>
          <TrayCell $w={48}>
            <Icon w={18} h={26} color="#7fd6f0" sw={1.8}>
              <rect x="5.5" y="1.5" width="7" height="15" rx="3.5" />
              <path d="M1.5 12 Q1.5 20 9 20 Q16.5 20 16.5 12 M9 20 V24.5" />
            </Icon>
          </TrayCell>
          <TrayCell $w={66}>
            ENG
            <br />
            US
          </TrayCell>
          <TrayCell $w={36} $ml={6}>
            <Icon w={26} h={20} color="#fff" sw={1.8}>
              <path d="M1.5 7 Q13 -3.5 24.5 7 M5 10.5 Q13 3 21 10.5 M8.5 14 Q13 9.5 17.5 14" />
              <circle cx="13" cy="16.8" r="2" fill="#fff" stroke="none" />
            </Icon>
          </TrayCell>
          <TrayCell $w={36}>
            <Icon w={26} h={22} color="#fff" sw={1.7}>
              <path d="M2 7.5 H6.5 L12 2.5 V19.5 L6.5 14.5 H2 Z M15.5 7.5 Q17.5 11 15.5 14.5" />
              <path d="M18.5 4.5 Q22 11 18.5 17.5 M21.5 2.5 Q26.5 11 21.5 19.5" stroke="#777" />
            </Icon>
          </TrayCell>
          <TrayCell $w={36}>
            <Icon w={26} h={22} color="#fff" sw={1.6}>
              <path d="M11 4 H20 Q22 4 22 6 V17 Q22 19 20 19 H5 Q3 19 3 17 V13" />
              <path d="M10.5 6.5 H19.5 V16.5 H5.5 V13 Z" fill="#fff" stroke="none" />
              <path d="M23.5 9 V14" strokeWidth="2.5" />
              <path d="M4.5 0 L1.5 7 H4.5 L3.5 12 L9 5 H6 L7.5 0 Z" fill="#fff" stroke="none" />
            </Icon>
          </TrayCell>
          <Clock>
            5:38 pm
            <DateLine>17/11/2023</DateLine>
          </Clock>
          <TrayCell $w={36} $ml={5}>
            <svg width="20" height="24" viewBox="0 0 20 24">
              <path d="M10 0.5 Q17 1 17 8.5 Q17 13 19.5 16.5 Q20 18.5 18 18.5 H2 Q0 18.5 0.5 16.5 Q3 13 3 8.5 Q3 1 10 0.5 Z M6.5 20 H13.5 Q13 23.2 10 23.5 Q7 23.2 6.5 20 Z" fill="#99ebff" />
            </svg>
          </TrayCell>
        </TaskBar>
      </Screen>
    </>
  );
}
